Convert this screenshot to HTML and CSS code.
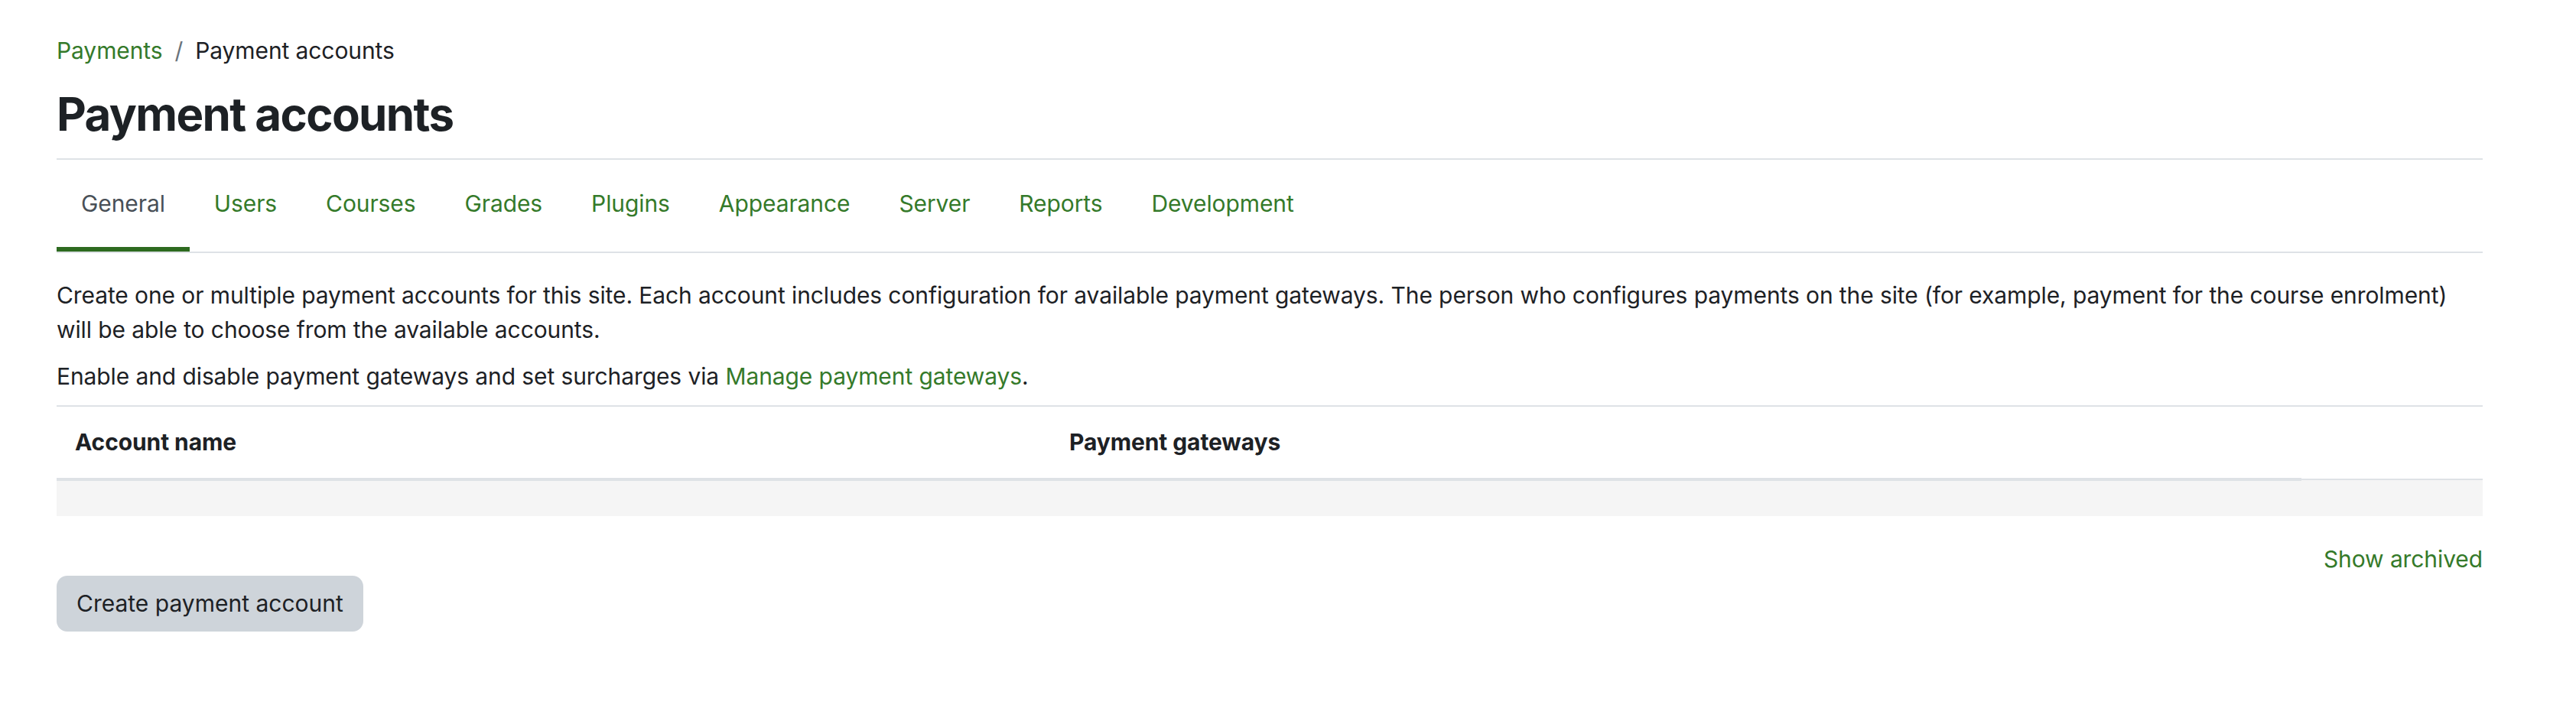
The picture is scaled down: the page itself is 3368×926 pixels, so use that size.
FILE: index.html
```html
<!DOCTYPE html>
<html lang="en">
<head>
<meta charset="utf-8">
<title>Payment accounts</title>
<link rel="stylesheet" href="styles.css">
</head>
<body>
<div class="page">
  <nav class="breadcrumb">
    <a class="crumb-link" href="#">Payments</a>
    <span class="crumb-sep">/</span>
    <span class="crumb-current">Payment accounts</span>
  </nav>
  <h1 class="page-title">Payment accounts</h1>
  <nav class="tabs">
    <a class="tab active" href="#">General</a>
    <a class="tab" href="#">Users</a>
    <a class="tab" href="#">Courses</a>
    <a class="tab" href="#">Grades</a>
    <a class="tab" href="#">Plugins</a>
    <a class="tab" href="#">Appearance</a>
    <a class="tab" href="#">Server</a>
    <a class="tab" href="#">Reports</a>
    <a class="tab" href="#">Development</a>
  </nav>
  <p class="intro">Create one or multiple payment accounts for this site. Each account includes configuration for available payment gateways. The person who configures payments on the site (for example, payment for the course enrolment) will be able to choose from the available accounts.</p>
  <p class="intro last">Enable and disable payment gateways and set surcharges via <a class="link" href="#">Manage payment gateways</a>.</p>
  <table class="accounts">
    <thead>
      <tr>
        <th class="col-name">Account name</th>
        <th class="col-gw">Payment gateways</th>
        <th class="col-act"></th>
      </tr>
    </thead>
    <tbody>
      <tr class="empty-row"><td></td><td></td><td></td></tr>
    </tbody>
  </table>
  <div class="archived"><a class="link" href="#">Show archived</a></div>
  <button class="btn" type="button">Create payment account</button>
</div>
</body>
</html>
```

FILE: styles.css
```css
* { box-sizing: border-box; }
html, body { margin: 0; padding: 0; background: #fff; }
body {
  font-family: Inter, "Noto Sans", "Liberation Sans", sans-serif;
  font-size: 30px;
  line-height: 45px;
  color: #1d2125;
  letter-spacing: -0.1px;
}
.page {
  width: 3172px;
  margin-left: 74px;
  padding-top: 44px;
}
a { text-decoration: none; }
.breadcrumb {
  display: flex;
  align-items: baseline;
}
.crumb-link { color: #357a2a; }
.crumb-sep { color: #6a737b; padding: 0 16px; }
.crumb-current { color: #1d2125; }
.page-title {
  margin: 24px 0 0;
  font-size: 60px;
  line-height: 72px;
  font-weight: 700;
  letter-spacing: -1.6px;
  padding-bottom: 22px;
  border-bottom: 2px solid #dee2e6;
}
.tabs {
  display: flex;
  border-bottom: 2px solid #dee2e6;
}
.tab {
  height: 120px;
  display: flex;
  align-items: center;
  padding: 0 32px;
  border-bottom: 6px solid transparent;
  color: #357a2a;
}
.tab.active {
  color: #495057;
  border-bottom-color: #2d6a1f;
}
.intro { margin: 0 0 16px; }
.tabs + .intro { margin-top: 33px; }
.intro.last { margin-bottom: 15px; }
.link { color: #357a2a; }
.accounts {
  width: 100%;
  border-collapse: collapse;
  border-top: 2px solid #dee2e6;
}
.accounts th {
  text-align: left;
  font-weight: 700;
  padding: 24px;
  border-bottom: 4px solid #dee2e6;
}
.accounts th.col-name { width: 1300px; }
.accounts th.col-gw { width: 1635px; }
.accounts th.col-act {
  width: 237px;
  padding-bottom: 26px;
  border-bottom-width: 2px;
}
.empty-row td {
  height: 48px;
  padding: 0;
  background: #f5f5f5;
}
.archived {
  margin-top: 34px;
  text-align: right;
}
.btn {
  display: block;
  font: inherit;
  color: #1d2125;
  background: #ced4da;
  border: 2px solid #ced4da;
  border-radius: 14px;
  padding: 12px 24px;
  height: 73px;
  margin-top: -1px;
}
```
